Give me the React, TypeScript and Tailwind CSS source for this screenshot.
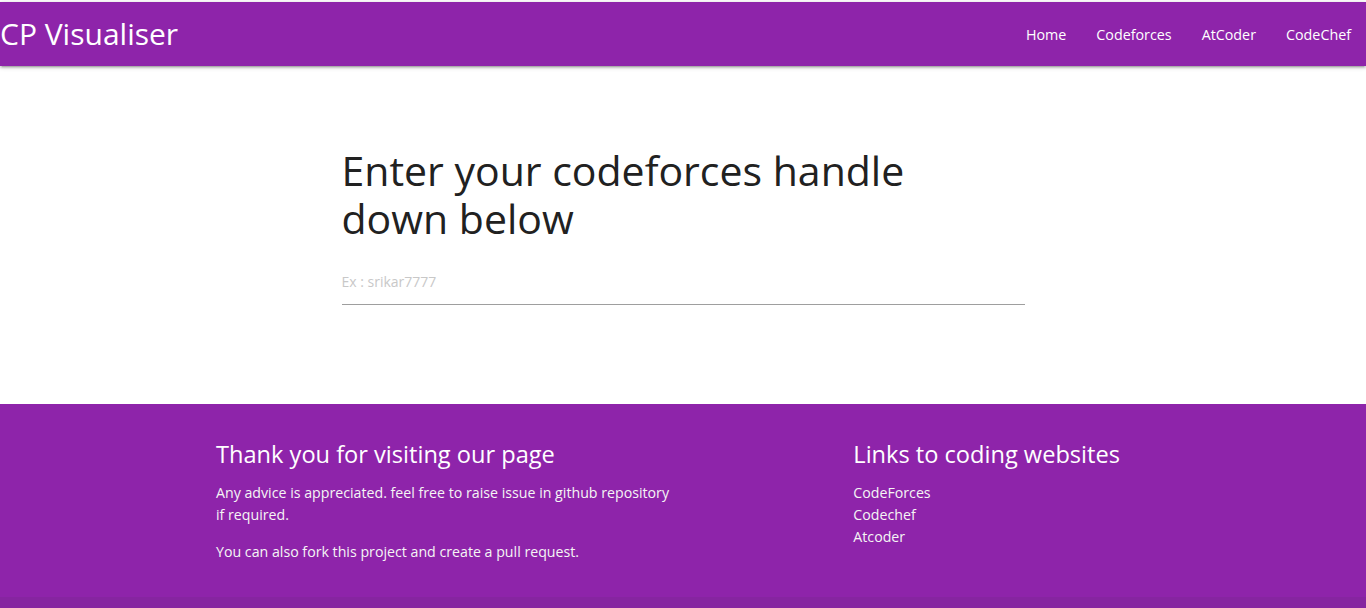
const NAV_LINKS = ['Home', 'Codeforces', 'AtCoder', 'CodeChef'];
const SITE_LINKS = ['CodeForces', 'Codechef', 'Atcoder'];

function Navbar() {
  return (
    <nav className="flex h-16 items-center justify-between bg-[#8e24aa] text-white shadow-[0_2px_2px_0_rgba(0,0,0,0.14),0_3px_1px_-2px_rgba(0,0,0,0.12),0_1px_5px_0_rgba(0,0,0,0.2)]">
      <a href="#" className="text-[30px] leading-none">
        CP Visualiser
      </a>
      <ul className="flex h-full items-center pt-[2px]">
        {NAV_LINKS.map((label) => (
          <li key={label}>
            <a href="#" className="block px-[15px] text-[14.3px]">
              {label}
            </a>
          </li>
        ))}
      </ul>
    </nav>
  );
}

function Footer() {
  return (
    <footer className="bg-[#8e24aa] text-white">
      <div className="mx-auto flex w-[956px] pt-[35px] pb-[34px]">
        <div className="w-1/2 px-[11px]">
          <h5 className="text-[23.6px] leading-[31px]">Thank you for visiting our page</h5>
          <p className="mt-[12px] text-[14.2px] leading-[22px] text-[#f5f5f5]">
            Any advice is appreciated. feel free to raise issue in github repository if
            required.
          </p>
          <p className="mt-[15px] text-[14.2px] leading-[22px] text-[#f5f5f5]">
            You can also fork this project and create a pull request.
          </p>
        </div>
        <div className="ml-[16.6667%] w-1/3 px-[11px]">
          <h5 className="text-[23.6px] leading-[31px]">Links to coding websites</h5>
          <ul className="mt-[12px] text-[14.2px] leading-[22px]">
            {SITE_LINKS.map((label) => (
              <li key={label}>
                <a href="#" className="text-[#f5f5f5]">
                  {label}
                </a>
              </li>
            ))}
          </ul>
        </div>
      </div>
      <div className="h-[50px] bg-[rgba(51,51,51,0.08)]" />
    </footer>
  );
}

export default function App() {
  return (
    <div className="min-h-screen bg-white font-['Open_Sans',sans-serif] text-[rgba(0,0,0,0.87)]">
      <div className="h-[2px] bg-white" />
      <Navbar />
      <main className="h-[338px] pt-[80px]">
        <div className="mx-auto w-1/2">
          <h4 className="w-[600px] text-[41px] leading-[48px] text-[#212121]">
            Enter your codeforces handle down below
          </h4>
          <input
            type="text"
            placeholder="Ex : srikar7777"
            className="mt-[17px] h-[46px] w-full border-b border-[#9e9e9e] bg-transparent text-[14px] outline-none placeholder:text-[#c8c8c8]"
          />
        </div>
      </main>
      <Footer />
    </div>
  );
}
